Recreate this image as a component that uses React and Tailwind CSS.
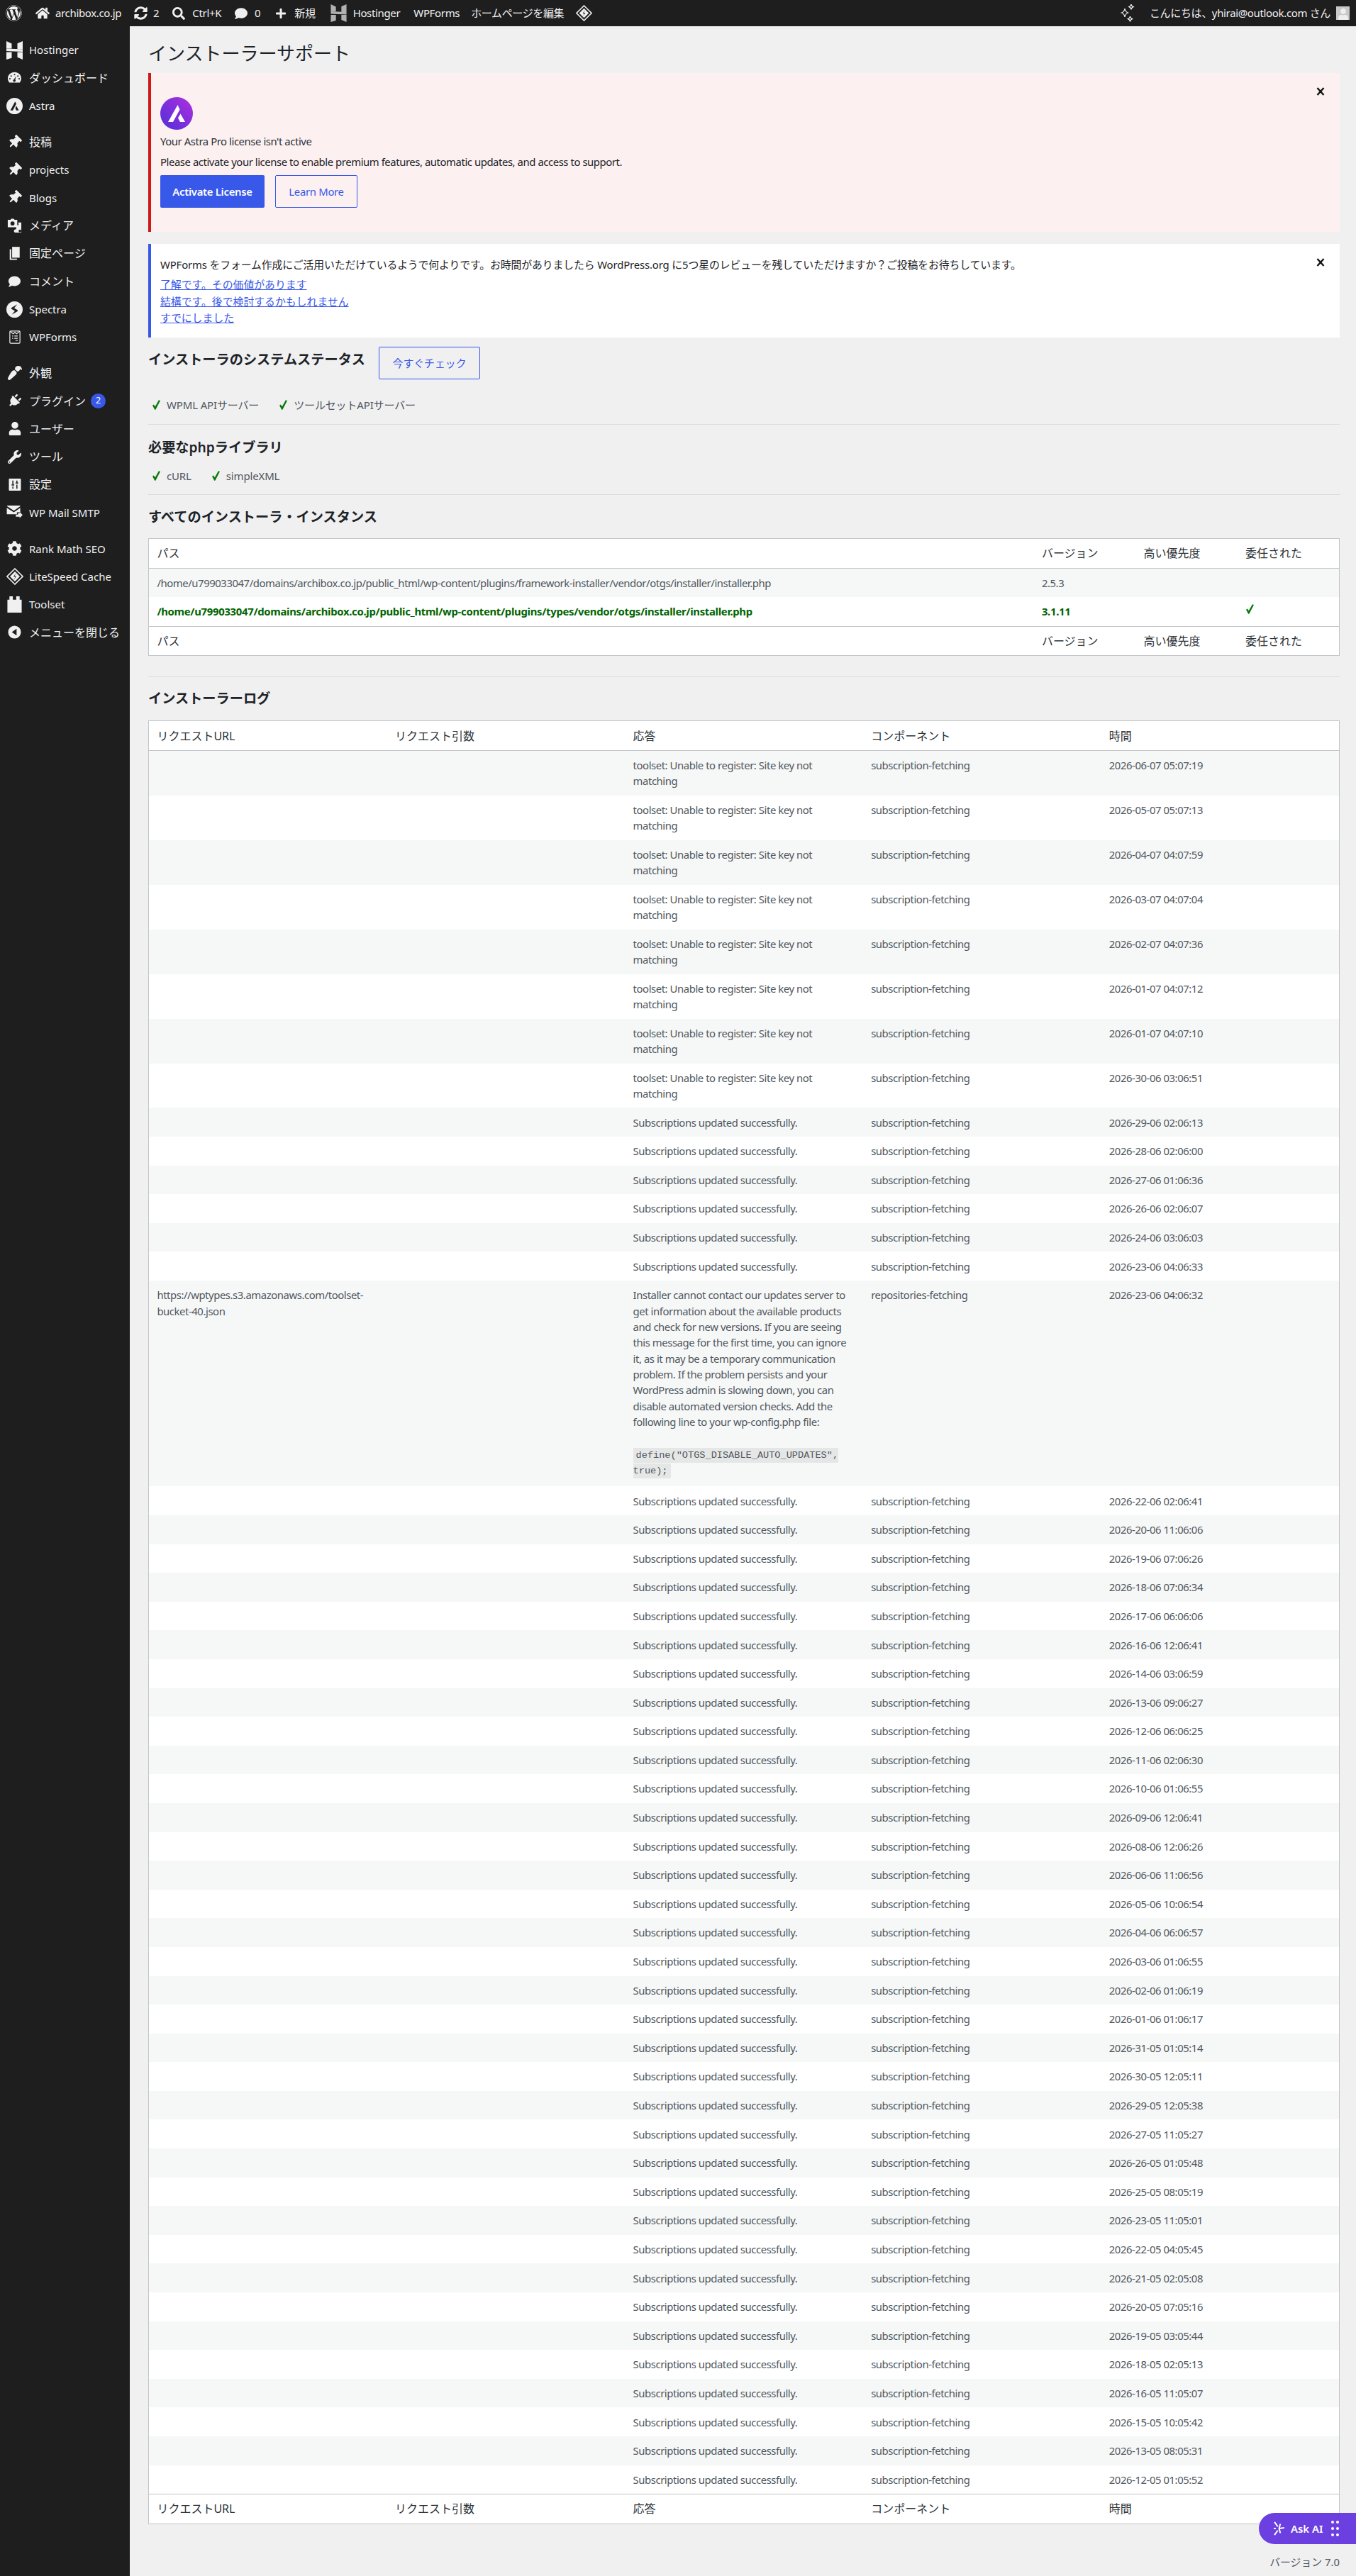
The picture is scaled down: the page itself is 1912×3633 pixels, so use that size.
import React from "react";
import {
  FaWordpress,
  FaHome,
  FaSyncAlt,
  FaSearch,
  FaComment,
  FaPlus,
  FaThumbtack,
  FaPaintBrush,
  FaPlug,
  FaUser,
  FaWrench,
  FaCog,
} from "react-icons/fa";

const HostingerIcon = ({ className }) => (
  <svg viewBox="0 0 23 26" className={className} fill="currentColor">
    <path d="M0 0l7.5 3.6v6.9H0zM15.5 3.2L23 0v11.5h-7.5zM0 15.5h7.5v8.3L0 26zM15.5 15.5H23V26l-7.5-3.2z" />
    <path d="M0 10.500l23 1v3.500l-23-1z" />
  </svg>
);

const GaugeIcon = ({ className }) => (
  <svg viewBox="0 0 20 20" className={className} fill="currentColor">
    <path fillRule="evenodd" d="M10 2.5c-5 0-9 3.6-9 8.5 0 2.2.8 4.2 2.2 5.7h13.6c1.4-1.5 2.2-3.5 2.2-5.7 0-4.9-4-8.5-9-8.5zM10 5a1 1 0 110 2 1 1 0 010-2zM5.5 6.8a1 1 0 110 2 1 1 0 010-2zM14.5 6.8a1 1 0 110 2 1 1 0 010-2zM3.8 10.5a1 1 0 110 2 1 1 0 010-2zM16.2 10.5a1 1 0 110 2 1 1 0 010-2zM12.2 7.5l-1.3 5.2a1.7 1.7 0 11-1.7-.4z" />
  </svg>
);

const AstraIcon = ({ className }) => (
  <svg viewBox="0 0 24 24" className={className}>
    <circle cx="12" cy="12" r="12" fill="#f0f0f1" />
    <path d="M12.8 5.5L5.8 18.5h3.6l5.2-9.7zM14.8 12l-1.7 3.1 1.6 3.4h3.6z" fill="#1e1e1e" />
  </svg>
);

const SpectraIcon = ({ className }) => (
  <svg viewBox="0 0 24 24" className={className}>
    <circle cx="12" cy="12" r="12" fill="#f0f0f1" />
    <path d="M16 4.5L8 9.2c-1 .6-1 1.8 0 2.4l4.5 2.4-4.5 5.5 8-4.7c1-.6 1-1.8 0-2.4L11.5 10z" fill="#1e1e1e" />
  </svg>
);

const MediaIcon = ({ className }) => (
  <svg viewBox="0 0 22 22" className={className} fill="currentColor">
    <path fillRule="evenodd" d="M1 2h4l1-1.500h4L11 2h4v11H1zM8 4.500a3 3 0 100 6 3 3 0 000-6z" />
    <path d="M16.500 6H21v15h-8a2.500 2.500 0 11.500-4.800V10h3.500zM19 16.500a2 2 0 100 4 2 2 0 000-4z" />
  </svg>
);

const PagesIcon = ({ className }) => (
  <svg viewBox="0 0 20 22" className={className} fill="currentColor">
    <path d="M6 0h12.500v18H6z" />
    <path d="M4.500 4v15.500H14V21.500H2V4z" />
  </svg>
);

const WPFormsIcon = ({ className }) => (
  <svg viewBox="0 0 20 24" className={className} fill="none" stroke="currentColor" strokeWidth="1.500">
    <rect x="1" y="1" width="18" height="22" rx="1.500" />
    <path d="M1.500 1.500L7 6l3-2.500L13 6l5.500-4.500M5 10h2M9 10h6M5 14h2M9 14h6M11 18h4" />
  </svg>
);

const SettingsIcon = ({ className }) => (
  <svg viewBox="0 0 18 18" className={className}>
    <rect width="18" height="18" rx="1" fill="#f0f0f1" />
    <path d="M6 3v6M6 12v3M4 9.500h4M12 3v3M12 9v6M10 6.500h4" stroke="#1e1e1e" strokeWidth="1.600" />
  </svg>
);

const MailIcon = ({ className }) => (
  <svg viewBox="0 0 24 20" className={className} fill="currentColor">
    <path d="M1.500 0h18c.5 0 1 .5 1 1L11 7.500 1 1c0-.5 0-1 .5-1zM.5 3.300L11 10l9.500-6.500V10h-5v3H1.500c-.5 0-1-.5-1-1z" />
    <path d="M17 11.500h2.500v-2L24 14l-4.500 4.800v-2.300H14v-3h3z" />
  </svg>
);

const DiamondIcon = ({ className }) => (
  <svg viewBox="0 0 24 24" className={className} fill="none" stroke="currentColor">
    <path d="M12 1l11 11-11 11L1 12z" strokeWidth="1.600" />
    <path d="M12 5l7 7-7 7-7-7z" fill="currentColor" strokeWidth="0" />
    <path d="M13.500 7l-3.500 5.500h2.500L10.500 17l3.500-5.500h-2.500z" fill="#1e1e1e" strokeWidth="0" />
  </svg>
);

const ToolsetIcon = ({ className }) => (
  <svg viewBox="0 0 21 24" className={className} fill="currentColor">
    <path d="M3 0h5v5h5V0h5v5h3v19H0V5h3z" />
  </svg>
);

const CollapseIcon = ({ className }) => (
  <svg viewBox="0 0 20 20" className={className}>
    <circle cx="10" cy="10" r="9.500" fill="#f0f0f1" />
    <path d="M13 5v10l-7-5z" fill="#1e1e1e" />
  </svg>
);

const SparkleIcon = ({ className }) => (
  <svg viewBox="0 0 24 27" className={className} fill="none" stroke="currentColor" strokeWidth="1.300">
    <path d="M9 7c.5 3 2 5 4.500 6-2.500 1-4 3-4.500 6-.5-3-2-5-4.500-6C7 12 8.500 10 9 7z" />
    <path d="M18 1c.3 1.800 1.200 3 3 3.700-1.800.7-2.700 2-3 3.700-.3-1.700-1.200-3-3-3.700 1.800-.7 2.700-1.900 3-3.700zM16.500 18c.3 1.800 1.200 3 3 3.700-1.800.7-2.700 2-3 3.700-.3-1.700-1.200-3-3-3.700 1.800-.7 2.700-1.900 3-3.700z" />
  </svg>
);

const CheckMark = ({ className }) => (
  <svg viewBox="0 0 13 16" className={className} fill="#0a7a0a">
    <path d="M0 9l2.200-1.600 2.300 3.400L10.500 0 13 1 5.200 16h-1.500z" />
  </svg>
);

const CloseIcon = () => (
  <svg viewBox="0 0 12 12" className="w-[12px] h-[12px]" fill="none" stroke="#111" strokeWidth="2.400">
    <path d="M1.500 1l9 10M10.500 1l-9 10" />
  </svg>
);

const menuGroups = [
  [
    { label: "Hostinger", icon: <HostingerIcon className="w-[23px] h-[26px]" /> },
    { label: "ダッシュボード", ja: true, icon: <GaugeIcon className="w-[21px] h-[21px]" /> },
    { label: "Astra", icon: <AstraIcon className="w-[23px] h-[23px]" /> },
  ],
  [
    { label: "投稿", ja: true, icon: <FaThumbtack className="w-[19px] h-[19px] rotate-45" /> },
    { label: "projects", icon: <FaThumbtack className="w-[19px] h-[19px] rotate-45" /> },
    { label: "Blogs", icon: <FaThumbtack className="w-[19px] h-[19px] rotate-45" /> },
    { label: "メディア", ja: true, icon: <MediaIcon className="w-[21px] h-[21px]" /> },
    { label: "固定ページ", ja: true, icon: <PagesIcon className="w-[17px] h-[19px]" /> },
    { label: "コメント", ja: true, icon: <FaComment className="w-[17px] h-[18px]" /> },
    { label: "Spectra", icon: <SpectraIcon className="w-[23px] h-[23px]" /> },
    { label: "WPForms", icon: <WPFormsIcon className="w-[16px] h-[19px]" /> },
  ],
  [
    { label: "外観", ja: true, icon: <FaPaintBrush className="w-[20px] h-[20px] rotate-180" /> },
    { label: "プラグイン", ja: true, icon: <FaPlug className="w-[19px] h-[19px] rotate-45" />, badge: "2" },
    { label: "ユーザー", ja: true, icon: <FaUser className="w-[18px] h-[19px]" /> },
    { label: "ツール", ja: true, icon: <FaWrench className="w-[19px] h-[19px]" /> },
    { label: "設定", ja: true, icon: <SettingsIcon className="w-[18px] h-[17px]" /> },
    { label: "WP Mail SMTP", icon: <MailIcon className="w-[23px] h-[19px]" /> },
  ],
  [
    { label: "Rank Math SEO", icon: <FaCog className="w-[21px] h-[21px]" /> },
    { label: "LiteSpeed Cache", icon: <DiamondIcon className="w-[24px] h-[24px]" /> },
    { label: "Toolset", icon: <ToolsetIcon className="w-[21px] h-[23px]" /> },
    { label: "メニューを閉じる", ja: true, icon: <CollapseIcon className="w-[19px] h-[19px]" /> },
  ],
];

const LONG_TEXT =
  "Installer cannot contact our updates server to get information about the available products and check for new versions. If you are seeing this message for the first time, you can ignore it, as it may be a temporary communication problem. If the problem persists and your WordPress admin is slowing down, you can disable automated version checks. Add the following line to your wp-config.php file:";

const registerTimes = [
  "2026-06-07 05:07:19",
  "2026-05-07 05:07:13",
  "2026-04-07 04:07:59",
  "2026-03-07 04:07:04",
  "2026-02-07 04:07:36",
  "2026-01-07 04:07:12",
  "2026-01-07 04:07:10",
  "2026-30-06 03:06:51",
];

const updatedBefore = [
  "2026-29-06 02:06:13",
  "2026-28-06 02:06:00",
  "2026-27-06 01:06:36",
  "2026-26-06 02:06:07",
  "2026-24-06 03:06:03",
  "2026-23-06 04:06:33",
];

const updatedAfter = [
  "2026-22-06 02:06:41",
  "2026-20-06 11:06:06",
  "2026-19-06 07:06:26",
  "2026-18-06 07:06:34",
  "2026-17-06 06:06:06",
  "2026-16-06 12:06:41",
  "2026-14-06 03:06:59",
  "2026-13-06 09:06:27",
  "2026-12-06 06:06:25",
  "2026-11-06 02:06:30",
  "2026-10-06 01:06:55",
  "2026-09-06 12:06:41",
  "2026-08-06 12:06:26",
  "2026-06-06 11:06:56",
  "2026-05-06 10:06:54",
  "2026-04-06 06:06:57",
  "2026-03-06 01:06:55",
  "2026-02-06 01:06:19",
  "2026-01-06 01:06:17",
  "2026-31-05 01:05:14",
  "2026-30-05 12:05:11",
  "2026-29-05 12:05:38",
  "2026-27-05 11:05:27",
  "2026-26-05 01:05:48",
  "2026-25-05 08:05:19",
  "2026-23-05 11:05:01",
  "2026-22-05 04:05:45",
  "2026-21-05 02:05:08",
  "2026-20-05 07:05:16",
  "2026-19-05 03:05:44",
  "2026-18-05 02:05:13",
  "2026-16-05 11:05:07",
  "2026-15-05 10:05:42",
  "2026-13-05 08:05:31",
  "2026-12-05 01:05:52",
];

const logRows = [
  ...registerTimes.map((time) => ({
    message: "toolset: Unable to register: Site key not matching",
    component: "subscription-fetching",
    time,
  })),
  ...updatedBefore.map((time) => ({
    message: "Subscriptions updated successfully.",
    component: "subscription-fetching",
    time,
  })),
  {
    url: "https://wptypes.s3.amazonaws.com/toolset-bucket-40.json",
    long: true,
    component: "repositories-fetching",
    time: "2026-23-06 04:06:32",
  },
  ...updatedAfter.map((time) => ({
    message: "Subscriptions updated successfully.",
    component: "subscription-fetching",
    time,
  })),
];

const TH = "px-[11.4px] py-[9.14px] text-left font-normal text-[16px] leading-[22.35px] text-[#2c3338]";
const TD = "px-[11.4px] py-[9.14px] align-top text-[14.86px] tracking-[-0.43px] leading-[22.35px] text-[#50575e] break-words";
const ACTIVE = "font-bold !text-[#006400] !tracking-[-0.3px]";

function Sidebar() {
  return (
    <aside className="w-[183px] shrink-0 bg-[#1e1e1e] text-[#f0f0f1] pt-[14px]">
      {menuGroups.map((group, i) => (
        <ul key={i} className="mb-[11.700px]">
          {group.map((item) => (
            <li key={item.label} className="flex items-center h-[39.3px]">
              <span className="w-[41px] flex justify-center shrink-0">{item.icon}</span>
              <span className={`whitespace-nowrap ${item.ja ? "text-[16px]" : "text-[15px]"}`}>{item.label}</span>
              {item.badge && (
                <span className="ml-[7px] w-[21px] h-[21px] rounded-full bg-[#3858e9] text-white text-[12.500px] flex items-center justify-center">
                  {item.badge}
                </span>
              )}
            </li>
          ))}
        </ul>
      ))}
    </aside>
  );
}

function TopBar() {
  return (
    <header className="h-[37px] bg-[#1e1e1e] text-[#f0f0f1] text-[15px] tracking-[-0.35px] flex items-center pl-[8px] pr-[9px]">
      <FaWordpress className="w-[23px] h-[23px]" />
      <FaHome className="w-[20px] h-[19px] ml-[19px]" />
      <span className="ml-[8px]">archibox.co.jp</span>
      <FaSyncAlt className="w-[19px] h-[19px] ml-[18px]" />
      <span className="ml-[8px]">2</span>
      <FaSearch className="w-[18px] h-[18px] ml-[19px]" />
      <span className="ml-[10px]">Ctrl+K</span>
      <FaComment className="w-[18px] h-[18px] ml-[19px]" />
      <span className="ml-[10px]">0</span>
      <FaPlus className="w-[16px] h-[16px] ml-[21px]" />
      <span className="ml-[11px]">新規</span>
      <HostingerIcon className="w-[23px] h-[25px] ml-[21px] opacity-70" />
      <span className="ml-[9px]">Hostinger</span>
      <span className="ml-[19px]">WPForms</span>
      <span className="ml-[16px]">ホームページを編集</span>
      <DiamondIcon className="w-[23px] h-[23px] ml-[17px]" />
      <SparkleIcon className="w-[24px] h-[27px] ml-auto" />
      <span className="ml-[20px]">こんにちは、yhirai@outlook.com さん</span>
      <span className="ml-[8px] w-[19px] h-[19px] bg-[#c8c8c8] flex items-end justify-center overflow-hidden">
        <FaUser className="w-[14px] h-[16px] text-[#eeeeee]" />
      </span>
    </header>
  );
}

function Dismiss() {
  return (
    <button className="absolute right-[21px] flex items-center justify-center">
      <CloseIcon />
    </button>
  );
}

function SectionTitle({ children, className = "" }) {
  return <h2 className={`text-[19.2px] leading-[26px] font-semibold text-[#1d2327] ${className}`}>{children}</h2>;
}

function Check({ children, className = "" }) {
  return (
    <span className={`inline-flex items-center text-[15px] tracking-[-0.15px] text-[#50575e] ${className}`}>
      <CheckMark className="w-[11px] h-[14px] mr-[9px]" />
      {children}
    </span>
  );
}

function InstanceHead() {
  return (
    <tr>
      <th className={TH}>パス</th>
      <th className={TH}>バージョン</th>
      <th className={TH}>高い優先度</th>
      <th className={TH}>委任された</th>
    </tr>
  );
}

function LogHead() {
  return (
    <tr>
      <th className={TH}>リクエストURL</th>
      <th className={TH}>リクエスト引数</th>
      <th className={TH}>応答</th>
      <th className={TH}>コンポーネント</th>
      <th className={TH}>時間</th>
    </tr>
  );
}

export default function App() {
  return (
    <div className="font-['Noto_Sans','Noto_Sans_CJK_JP',sans-serif] min-h-[3633px] flex flex-col bg-[#f0f0f1]">
      <TopBar />
      <div className="flex flex-1">
        <Sidebar />
        <main className="flex-1 min-w-0 pl-[26px] pr-[23px] pt-[20px] text-[#3c434a]">
          <h1 className="text-[26px] leading-[36px] font-normal text-[#1d2327]">インストーラーサポート</h1>

          {/* Astra license notice */}
          <section className="relative mt-[10px] bg-[#fcf0f1] border-l-[4.500px] border-[#cc1818] pl-[13px] pt-[34px] pb-[34px] text-[14.86px]">
            <span className="top-[20px] absolute right-0 w-[45px]">
              <Dismiss />
            </span>
            <svg viewBox="0 0 46 46" className="w-[46px] h-[46px]">
              <defs>
                <linearGradient id="astra" x1="0" y1="1" x2="1" y2="0">
                  <stop offset="0" stopColor="#4f2fd8" />
                  <stop offset="1" stopColor="#b02fe0" />
                </linearGradient>
              </defs>
              <circle cx="23" cy="23" r="23" fill="url(#astra)" />
              <path d="M24.500 11L11 35h7l9.500-17.500zM28.500 23.500L25 29.500l3 5.500h7z" fill="#fff" />
            </svg>
            <p className="mt-[5px] leading-[22px] tracking-[-0.43px] text-[#2c3338]">Your Astra Pro license isn&apos;t active</p>
            <p className="mt-[7px] leading-[22px] tracking-[-0.43px] text-[#1d2327]">
              Please activate your license to enable premium features, automatic updates, and access to support.
            </p>
            <div className="mt-[8px] flex gap-[15px] tracking-[-0.3px]">
              <button className="w-[147px] h-[46px] bg-[#3858e9] text-white font-semibold rounded-[2px]">
                Activate License
              </button>
              <button className="w-[116px] h-[46px] border border-[#3858e9] text-[#3858e9] rounded-[2px]">
                Learn More
              </button>
            </div>
          </section>

          {/* WPForms review notice */}
          <section className="relative mt-[17px] bg-white border-l-[4.500px] border-[#3858e9] pl-[13px] pt-[18px] pb-[15.500px] text-[14.86px]">
            <span className="top-[20px] absolute right-0 w-[45px]">
              <Dismiss />
            </span>
            <p className="leading-[22px] tracking-[-0.12px] text-[#1d2327]">
              WPForms をフォーム作成にご活用いただけているようで何よりです。お時間がありましたら WordPress.org に5つ星のレビューを残していただけますか？ご投稿をお待ちしています。
            </p>
            <ul className="mt-[6px] text-[#3858e9] underline leading-[23.500px]">
              <li>了解です。その価値があります</li>
              <li>結構です。後で検討するかもしれません</li>
              <li>すでにしました</li>
            </ul>
          </section>

          <div className="mt-[13px] flex items-start gap-[19px]">
            <SectionTitle className="mt-[5px]">インストーラのシステムステータス</SectionTitle>
            <button className="w-[143px] h-[46px] border border-[#3858e9] text-[#3858e9] text-[14.86px] rounded-[2px]">
              今すぐチェック
            </button>
          </div>
          <div className="mt-[25px] h-[22px] pl-[6px] flex items-center gap-[29px]">
            <Check>WPML APIサーバー</Check>
            <Check>ツールセットAPIサーバー</Check>
          </div>
          <hr className="mt-[16px] border-[#dcdcde]" />

          <SectionTitle className="mt-[19px]">必要なphpライブラリ</SectionTitle>
          <div className="mt-[16px] h-[22px] pl-[6px] flex items-center gap-[29px]">
            <Check>cURL</Check>
            <Check>simpleXML</Check>
          </div>
          <hr className="mt-[15px] border-[#dcdcde]" />

          <SectionTitle className="mt-[18px]">すべてのインストーラ・インスタンス</SectionTitle>
          <table className="mt-[17px] w-full table-fixed bg-white border border-[#c3c4c7] border-separate border-spacing-0">
            <colgroup>
              <col />
              <col className="w-[143.500px]" />
              <col className="w-[143.500px]" />
              <col className="w-[143.500px]" />
            </colgroup>
            <thead>
              <InstanceHead />
            </thead>
            <tbody>
              <tr className="bg-[#f6f7f7]">
                <td className={`${TD} border-t border-[#c3c4c7]`}>
                  /home/u799033047/domains/archibox.co.jp/public_html/wp-content/plugins/framework-installer/vendor/otgs/installer/installer.php
                </td>
                <td className={`${TD} border-t border-[#c3c4c7]`}>2.5.3</td>
                <td className={`${TD} border-t border-[#c3c4c7]`}></td>
                <td className={`${TD} border-t border-[#c3c4c7]`}></td>
              </tr>
              <tr>
                <td className={`${TD} ${ACTIVE}`}>
                  /home/u799033047/domains/archibox.co.jp/public_html/wp-content/plugins/types/vendor/otgs/installer/installer.php
                </td>
                <td className={`${TD} ${ACTIVE}`}>3.1.11</td>
                <td className={TD}></td>
                <td className={TD}>
                  <CheckMark className="w-[11px] h-[14px] mt-[1px] ml-[1px]" />
                </td>
              </tr>
            </tbody>
            <tfoot>
              <tr className="[&>th]:border-t [&>th]:border-[#c3c4c7]">
                <th className={TH}>パス</th>
                <th className={TH}>バージョン</th>
                <th className={TH}>高い優先度</th>
                <th className={TH}>委任された</th>
              </tr>
            </tfoot>
          </table>
          <hr className="mt-[29px] border-[#dcdcde]" />

          <SectionTitle className="mt-[17px]">インストーラーログ</SectionTitle>
          <table className="mt-[18px] w-full table-fixed bg-white border border-[#c3c4c7] border-separate border-spacing-0">
            <thead className="[&_th]:border-b [&_th]:border-[#c3c4c7]">
              <LogHead />
            </thead>
            <tbody>
              {logRows.map((row, i) => (
                <tr key={i} className={i % 2 === 0 ? "bg-[#f6f7f7]" : ""}>
                  <td className={TD}>{row.url}</td>
                  <td className={TD}></td>
                  <td className={row.long ? `${TD} !pb-[13.14px]` : TD}>
                    {row.long ? (
                      <>
                        {LONG_TEXT}
                        <br />
                        <br />
                        <code className="font-['Liberation_Mono',monospace] text-[13.6px] leading-none tracking-normal bg-[#e5e6e6] px-[4px] py-[3px]">
                          define(&quot;OTGS_DISABLE_AUTO_UPDATES&quot;, true);
                        </code>
                      </>
                    ) : (
                      row.message
                    )}
                  </td>
                  <td className={TD}>{row.component}</td>
                  <td className={TD}>{row.time}</td>
                </tr>
              ))}
            </tbody>
            <tfoot className="[&_th]:border-t [&_th]:border-[#c3c4c7]">
              <LogHead />
            </tfoot>
          </table>

          <p className="mt-[42px] text-right text-[14.86px] leading-[22px] text-[#50575e]">バージョン 7.0</p>
        </main>
      </div>

      {/* floating assistant button */}
      <div className="fixed right-0 bottom-[45px] w-[137px] h-[44px] rounded-l-[22px] bg-[#6b3fe0] text-white flex items-center pl-[20px] text-[14.86px] font-semibold">
        <svg viewBox="0 0 18 24" className="w-[17px] h-[22px]" fill="none" stroke="currentColor" strokeWidth="2.200">
          <path d="M2 2l5 7M2 22l5-7M4 12h-3M9 12l8-1M9 12l2 7M9 12l2-7" />
        </svg>
        <span className="ml-[8px]">Ask AI</span>
        <div className="ml-[12px] grid grid-cols-2 gap-x-[3px] gap-y-[5px]">
          {[0, 1, 2, 3, 4, 5].map((d) => (
            <span key={d} className="w-[4px] h-[4px] rounded-full bg-white"></span>
          ))}
        </div>
      </div>
    </div>
  );
}
